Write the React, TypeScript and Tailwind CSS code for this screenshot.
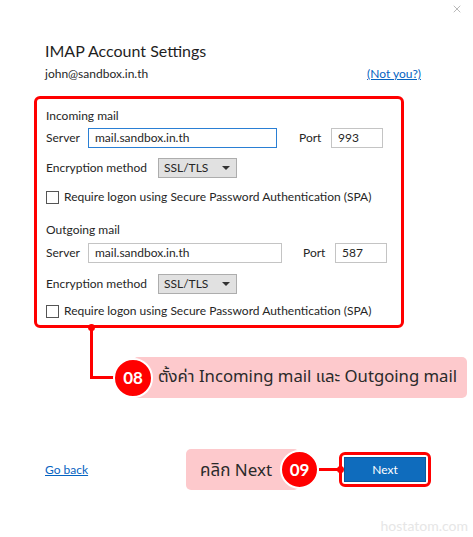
import { X } from "lucide-react";

const font = { fontFamily: '"Segoe UI", Lato, "Liberation Sans", sans-serif' };
const thai = { fontFamily: '"Noto Sans Thai", "Noto Sans", Lato, sans-serif' };

function Checkbox({ label }: { label: string }) {
  return (
    <div className="flex items-center h-[14px]">
      <span className="w-[13px] h-[13px] border border-[#555] bg-white" />
      <span className="ml-[5px]">{label}</span>
    </div>
  );
}

function ServerRow({ inputW, focused, portGap, port }: { inputW: string; focused?: boolean; portGap: string; port: string }) {
  return (
    <div className="flex items-center h-[20px]">
      <span className="w-[42px]">Server</span>
      <div
        className={`${inputW} h-[20px] flex items-center pl-[6px] border ${
          focused ? "border-[#2a7fd4]" : "border-[#c4c4c4]"
        }`}
      >
        mail.sandbox.in.th
      </div>
      <span className={`${portGap} w-[32px]`}>Port</span>
      <div className="w-[52px] h-[20px] flex items-center pl-[6px] border border-[#c4c4c4]">{port}</div>
    </div>
  );
}

function EncryptionRow() {
  return (
    <div className="flex items-center h-[20px]">
      <span className="w-[112px]">Encryption method</span>
      <div className="w-[79px] h-[20px] flex items-center justify-between px-[5px] bg-[#e1e1e1] border border-[#adadad]">
        <span>SSL/TLS</span>
        <svg width="8" height="5" viewBox="0 0 8 5" className="mr-[1px]">
          <path d="M0 0h8L4 4z" fill="#333" />
        </svg>
      </div>
    </div>
  );
}

export default function App() {
  return (
    <div className="w-[473px] h-[537px] overflow-hidden bg-white text-[12px] text-[#262626] relative" style={font}>
      {/* close */}
      <div className="flex justify-end pt-[3px] pr-[10px]">
        <X className="w-[12px] h-[12px] text-[#8a8a8a]" strokeWidth={1.2} />
      </div>

      {/* header */}
      <div className="pl-[45px] pr-[52px] mt-[25px]">
        <h1 className="text-[16px] leading-[22px] text-[#1f1f1f]">IMAP Account Settings</h1>
        <div className="flex justify-between mt-[4px] leading-[16px]">
          <span>john@sandbox.in.th</span>
          <span className="text-[#0563c1] underline">(Not you?)</span>
        </div>
      </div>

      {/* settings box */}
      <div className="ml-[34px] mt-[14px] w-[370px] border-[3px] border-[#ff0000] rounded-[6px] pl-[9px] pt-[8px] pb-[7px]">
        <div className="h-[18px] leading-[18px]">Incoming mail</div>
        <div className="mt-[3px]">
          <ServerRow inputW="w-[189px]" focused portGap="ml-[22px]" port="993" />
        </div>
        <div className="mt-[10px]">
          <EncryptionRow />
        </div>
        <div className="mt-[12px]">
          <Checkbox label="Require logon using Secure Password Authentication (SPA)" />
        </div>
        <div className="mt-[17px] h-[18px] leading-[18px]">Outgoing mail</div>
        <div className="mt-[4px]">
          <ServerRow inputW="w-[194px]" portGap="ml-[21px]" port="587" />
        </div>
        <div className="mt-[11px]">
          <EncryptionRow />
        </div>
        <div className="mt-[10px]">
          <Checkbox label="Require logon using Secure Password Authentication (SPA)" />
        </div>
      </div>

      {/* callout 08 */}
      <div className="flex items-start">
        <div className="relative ml-[90px] w-[25px] h-[51px] border-l-[3px] border-b-[3px] border-[#ff0000]">
          <span className="absolute -top-[4px] -left-[5px] w-[7px] h-[7px] rounded-full bg-[#ff0000]" />
        </div>
        <div className="flex items-center mt-[29px] -ml-[2px]">
          <div className="relative z-10 w-[40px] h-[40px] rounded-full bg-[#ff0000] border-2 border-white flex items-center justify-center text-white font-bold text-[17px]">
            08
          </div>
          <div
            className="-ml-[20px] w-[334px] h-[41px] rounded-[5px] bg-[#fdc9cc] pl-[25px] flex items-center text-[16.7px] text-[#2a2a2a]"
            style={thai}
          >
            ตั้งค่า Incoming mail และ Outgoing mail
          </div>
        </div>
      </div>

      {/* footer */}
      <div className="flex items-center mt-[51px] h-[41px]">
        <span className="ml-[45px] text-[#0563c1] underline">Go back</span>
        <div className="ml-auto mr-[42px] flex items-center">
          <div
            className="w-[113px] h-[41px] rounded-[5px] bg-[#fdc9cc] pl-[14px] pt-[4px] flex items-center text-[17px] text-[#2a2a2a]"
            style={thai}
          >
            คลิก Next
          </div>
          <div className="relative z-10 -ml-[19px] w-[39px] h-[39px] rounded-full bg-[#ff0000] border-2 border-white flex items-center justify-center text-white font-bold text-[17px]">
            09
          </div>
          <div className="w-[20px] h-[3px] bg-[#ff0000]" />
          <div className="relative border-[3px] border-[#ff0000] rounded-[6px] p-[2px]">
            <span className="absolute top-[11px] -left-[5px] w-[7px] h-[7px] rounded-full bg-[#ff0000]" />
            <div className="w-[82px] h-[25px] bg-[#0f6cbd] border border-[#0a5a9e] flex items-center justify-center text-white">
              Next
            </div>
          </div>
        </div>
      </div>

      {/* watermark */}
      <div className="flex justify-end pr-[5px] mt-[26px] text-[14px] text-[#e6e6e6] leading-[20px]">hostatom.com</div>
    </div>
  );
}
